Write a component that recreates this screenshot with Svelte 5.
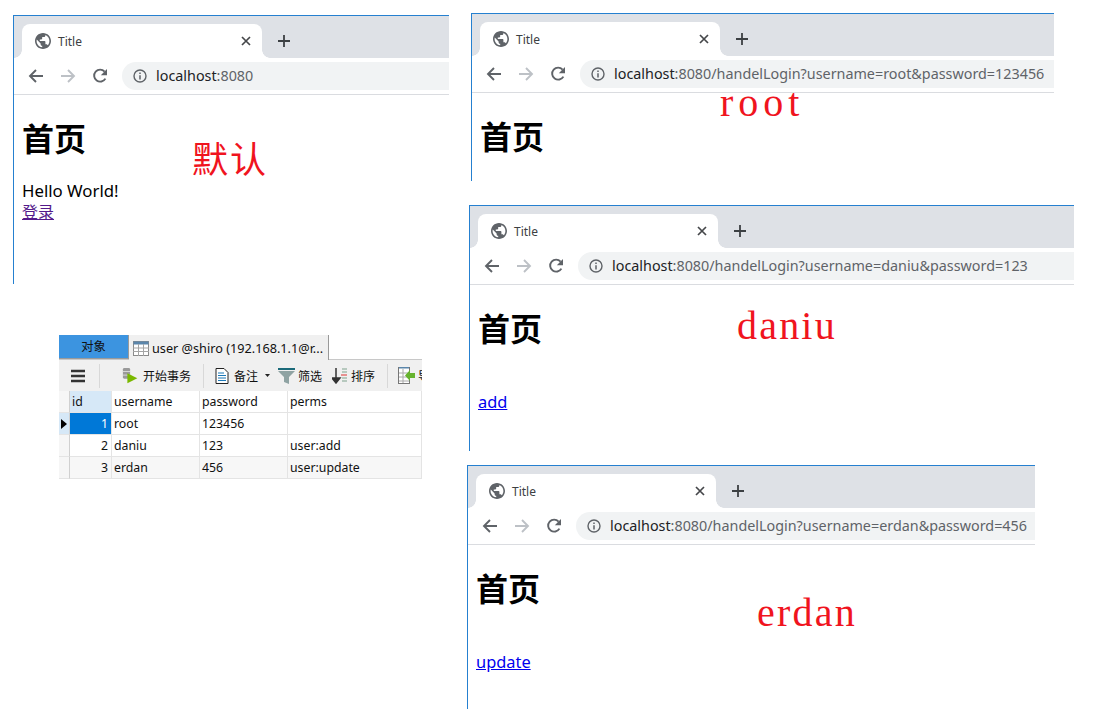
<script>
  const rows = [
    { id: 1, username: "root", password: "123456", perms: "", current: true },
    { id: 2, username: "daniu", password: "123", perms: "user:add" },
    { id: 3, username: "erdan", password: "456", perms: "user:update" },
  ];
</script>

{#snippet browser(cls, path, hello, link, visited)}
  <section class="win {cls}">
    <div class="tabstrip">
      <div class="tab">
        <svg class="globe" width="16" height="16" viewBox="2 2 20 20"><circle cx="12" cy="12" r="10" fill="#fff"/><path fill="#5f6368" d="M12 2C6.48 2 2 6.48 2 12s4.48 10 10 10 10-4.48 10-10S17.52 2 12 2zm-1 17.93c-3.95-.49-7-3.85-7-7.93 0-.62.08-1.21.21-1.79L9 15v1c0 1.1.9 2 2 2v1.93zm6.9-2.54c-.26-.81-1-1.39-1.9-1.39h-1v-3c0-.55-.45-1-1-1H8v-2h2c.55 0 1-.45 1-1V7h2c1.1 0 2-.9 2-2v-.41c2.93 1.19 5 4.06 5 7.41 0 2.08-.8 3.97-2.1 5.39z"/></svg>
        <span class="tabtitle">Title</span>
        <svg class="close" width="10" height="10" viewBox="0 0 10 10"><path d="M1 1l8 8M9 1l-8 8" stroke="#45474a" stroke-width="1.7" fill="none"/></svg>
      </div>
      <svg class="plus" width="12" height="12" viewBox="0 0 12 12"><path d="M6 0v12M0 6h12" stroke="#3c4043" stroke-width="1.8" fill="none"/></svg>
    </div>
    <div class="toolbar">
      <svg class="nav" width="16" height="16" viewBox="0 0 16 16"><path d="M15 8H2M8 2L2 8l6 6" stroke="#5f6368" stroke-width="1.9" fill="none"/></svg>
      <svg class="nav" width="16" height="16" viewBox="0 0 16 16"><path d="M1 8h13M8 2l6 6-6 6" stroke="#bdc1c6" stroke-width="1.9" fill="none"/></svg>
      <svg class="nav" width="16" height="16" viewBox="0 0 16 16"><path d="M13.400 10.600A6 6 0 1 1 12.600 3.600" stroke="#5f6368" stroke-width="1.9" fill="none"/><path d="M15 1v6.200H8.800z" fill="#5f6368"/></svg>
      <div class="omnibox">
        <svg class="info" width="14" height="14" viewBox="0 0 14 14"><circle cx="7" cy="7" r="6" stroke="#5f6368" stroke-width="1.4" fill="none"/><path d="M7 6.200v4.200M7 3.600v1.500" stroke="#5f6368" stroke-width="1.5"/></svg>
        <span class="url"><span class="host">localhost</span>{path}</span>
      </div>
    </div>
    <div class="page">
      <h1>首页</h1>
      <div class="line">{hello}</div>
      {#if link}<a class:visited href={"#"}>{link}</a>{/if}
    </div>
  </section>
{/snippet}

<main class="canvas">
  {@render browser("w1", ":8080", "Hello World!", "登录", true)}
  {@render browser("w2", ":8080/handelLogin?username=root&password=123456", "", "", false)}
  {@render browser("w3", ":8080/handelLogin?username=daniu&password=123", "", "add", false)}
  {@render browser("w4", ":8080/handelLogin?username=erdan&password=456", "", "update", false)}

  <span class="note n-default">默认</span>
  <span class="note n-root">root</span>
  <span class="note n-daniu">daniu</span>
  <span class="note n-erdan">erdan</span>

  <section class="navicat">
    <div class="nc-tabs">
      <div class="nc-objects">对象</div>
      <div class="nc-tab">
        <svg width="16" height="16" viewBox="0 0 16 16"><rect x="0.5" y="1.5" width="15" height="14" fill="#fff" stroke="#8a8a8a"/><rect x="0.5" y="1.5" width="15" height="3" fill="#5b86ab"/><path d="M0 8h16M0 11.5h16M5.5 4v12M10.5 4v12" stroke="#a5a5a5"/></svg>
        <span>user @shiro (192.168.1.1@r...</span>
      </div>
    </div>
    <div class="nc-toolbar">
      <svg class="menu" width="14" height="14" viewBox="0 0 14 14"><path d="M0 2h14M0 7h14M0 12h14" stroke="#333" stroke-width="2.6"/></svg>
      <i class="sep"></i>
      <button class="begin">
        <svg width="18" height="18" viewBox="0 0 20 20"><rect x="1" y="1" width="8" height="12" rx="1.5" fill="#9a9a9a"/><path d="M1 5h8M1 9h8" stroke="#ddd"/><path d="M6 7l11 5.500L6 18z" fill="#7ab800"/></svg>
        开始事务
      </button>
      <i class="sep"></i>
      <button class="memo">
        <svg width="14" height="16" viewBox="0 0 14 16"><path d="M1 .5h8l4 4v11H1z" fill="#fff" stroke="#222"/><path d="M3 5h6M3 7.500h8M3 10h8M3 12.500h8" stroke="#1b78b8"/></svg>
        备注
        <svg class="caret" width="5" height="3" viewBox="0 0 5 3"><path d="M0 0h5L2.500 3z" fill="#222"/></svg>
      </button>
      <button class="filter">
        <svg width="17" height="16" viewBox="0 0 17 16"><path d="M0 0h17v2H0z" fill="#1b6a7a"/><path d="M0 3h17l-6 6v7l-5-2V9z" fill="#8fa3a3"/></svg>
        筛选
      </button>
      <button class="sort">
        <svg width="15" height="16" viewBox="0 0 15 16"><path d="M4 0v11M0 10l4 5 4-5z" fill="#333" stroke="#333" stroke-width="1.500"/><path d="M10 1h5M10 4h5M10 10h5M10 13h5" stroke="#7fa28d"/><path d="M9 7h6" stroke="#d33"/></svg>
        排序
      </button>
      <i class="sep"></i>
      <button class="export">
        <svg width="17" height="17" viewBox="0 0 17 17"><rect x="0.500" y="0.500" width="11" height="16" fill="#fff" stroke="#777"/><path d="M1 0.500h10" stroke="#5b86ab" stroke-width="2"/><path d="M1 6h10M1 10h10M1 14h10M5 2v14" stroke="#aaa"/><path d="M17 6h-5V3L7 8.500l5 5.500v-3h5z" fill="#67b32e"/></svg>
        导
      </button>
    </div>
    <div class="grid head">
      <div class="mark"></div>
      <div class="cell idh">id</div>
      <div class="cell">username</div>
      <div class="cell">password</div>
      <div class="cell">perms</div>
    </div>
    {#each rows as r, i}
      <div class="grid row" class:alt={i === 2}>
        <div class="mark" class:on={r.current}>
          {#if r.current}<svg width="6" height="10" viewBox="0 0 6 10"><path d="M0 0l6 5-6 5z" fill="#000"/></svg>{/if}
        </div>
        <div class="cell num" class:sel={r.current}>{r.id}</div>
        <div class="cell">{r.username}</div>
        <div class="cell">{r.password}</div>
        <div class="cell">{r.perms}</div>
      </div>
    {/each}
  </section>
</main>

<style>
  :global(body) {
    background: #fff;
  }
  .canvas {
    position: relative;
    width: 1103px;
    height: 721px;
    overflow: hidden;
    font-family: "Noto Sans", "Noto Sans CJK SC", sans-serif;
  }

  /* the collage: each screenshot sits where it was pasted */
  .win {
    position: absolute;
    box-sizing: border-box;
    overflow: hidden;
    border-left: 1px solid #2580d0;
    border-top: 1px solid #2580d0;
    background: #fff;
  }
  .w1 { left: 13px; top: 15px; width: 436px; height: 269px; }
  .w2 { left: 471px; top: 13px; width: 583px; height: 168px; }
  .w3 { left: 469px; top: 205px; width: 605px; height: 246px; }
  .w4 { left: 467px; top: 465px; width: 568px; height: 244px; }

  .tabstrip {
    display: flex;
    align-items: flex-end;
    height: 42px;
    padding-left: 8px;
    background: #dee1e6;
  }
  .tab {
    position: relative;
    display: flex;
    align-items: center;
    box-sizing: border-box;
    width: 240px;
    height: 34px;
    padding: 0 11px 0 13px;
    background: #fff;
    border-radius: 8px 8px 0 0;
  }
  .tab::before,
  .tab::after {
    content: "";
    position: absolute;
    bottom: 0;
    width: 8px;
    height: 8px;
  }
  .tab::before {
    left: -8px;
    background: radial-gradient(circle at 0 0, transparent 7.5px, #fff 8px);
  }
  .tab::after {
    right: -8px;
    background: radial-gradient(circle at 100% 0, transparent 7.5px, #fff 8px);
  }
  .globe { flex: none; }
  .tabtitle {
    flex: 1;
    margin-left: 7px;
    font: 12px "Noto Sans", sans-serif;
    color: #3c4043;
  }
  .close { flex: none; }
  .plus {
    flex: none;
    margin: 0 0 11px 16px;
  }

  .toolbar {
    display: flex;
    align-items: center;
    height: 37px;
    padding-left: 14px;
    box-sizing: border-box;
    border-bottom: 1px solid #dadce0;
  }
  .nav {
    flex: none;
    margin-right: 16px;
  }
  .omnibox {
    flex: 1;
    display: flex;
    align-items: center;
    height: 28px;
    margin-left: -2px;
    margin-right: -40px;
    padding-left: 11px;
    border-radius: 14px 0 0 14px;
    background: #f1f3f4;
  }
  .url {
    margin-left: 9px;
    margin-top: -2px;
    font: 14.350px "Noto Sans", sans-serif;
    color: #5f6368;
    white-space: nowrap;
  }
  .host { color: #202124; }

  .page {
    padding: 0 8px;
    color: #000;
    line-height: 22px;
  }
  h1 {
    margin: 23px 0 24px;
    font-size: 32px;
    line-height: 38px;
    font-weight: 700;
    font-family: "Noto Sans CJK SC", sans-serif;
  }
  .line {
    height: 21px;
    font-size: 16.800px;
  }
  a { color: #0000ee; font-size: 16.400px; }
  a.visited { color: #551a8b; font-size: 16px; }

  .note {
    position: absolute;
    color: #f0141e;
    line-height: 1;
    white-space: nowrap;
  }
  .n-default {
    left: 192px;
    top: 139px;
    font-family: "Noto Sans CJK SC", serif;
    font-size: 36px;
    letter-spacing: 2px;
  }
  .n-root, .n-daniu, .n-erdan {
    font-family: "Liberation Serif", serif;
    font-size: 40px;
  }
  .n-root { left: 720px; top: 83px; letter-spacing: 5px; }
  .n-daniu { left: 737px; top: 306px; letter-spacing: 2.200px; }
  .n-erdan { left: 757px; top: 593px; letter-spacing: 2.200px; }

  .navicat {
    position: absolute;
    left: 59px;
    top: 335px;
    width: 363px;
    font: 12.300px "Noto Sans", "Noto Sans CJK SC", sans-serif;
    color: #111;
  }
  .nc-tabs {
    display: flex;
    height: 25px;
    border-bottom: 1px solid #c8c8c8;
    box-sizing: border-box;
  }
  .nc-objects {
    width: 70px;
    height: 24px;
    line-height: 24px;
    text-align: center;
    background: #3c94e0;
    border-right: 1px solid #9a9a9a;
    border-bottom: 1px solid #9a9a9a;
    box-sizing: border-box;
  }
  .nc-tab {
    display: flex;
    align-items: center;
    gap: 3px;
    width: 200px;
    height: 25px;
    padding-left: 4px;
    box-sizing: border-box;
    background: #f0f0f0;
    border-right: 1px solid #999;
    white-space: nowrap;
    font-size: 12.700px;
  }
  .nc-toolbar {
    display: flex;
    align-items: center;
    height: 31px;
    background: #f0f0f0;
    overflow: hidden;
  }
  .menu { margin-left: 12px; flex: none; }
  .sep {
    flex: none;
    width: 1px;
    height: 24px;
    background: #d8d8d8;
  }
  .nc-toolbar > .sep:nth-of-type(1) { margin-left: 14px; }
  .nc-toolbar button {
    flex: none;
    display: flex;
    align-items: center;
    gap: 3px;
    padding: 0;
    border: 0;
    background: none;
    font: inherit;
    font-size: 12px;
    color: #111;
    white-space: nowrap;
  }
  .nc-toolbar .begin { margin: 0 12px 0 22px; }
  .nc-toolbar .memo { margin: 0 8px 0 11px; gap: 5px; }
  .caret { margin-left: 2px; }
  .nc-toolbar .filter { margin-right: 10px; }
  .nc-toolbar .sort { margin-right: 12px; gap: 4px; }
  .nc-toolbar .export { margin-left: 10px; }

  .grid {
    display: grid;
    grid-template-columns: 11px 42px 88px 88px 1fr;
    height: 22px;
  }
  .row { background: #fff; }
  .row.alt { background: #f7f7f7; }
  .cell {
    box-sizing: border-box;
    padding: 0 2px;
    line-height: 21px;
    white-space: nowrap;
    border-right: 1px solid #e4e4e4;
    border-bottom: 1px solid #e4e4e4;
  }
  .idh { background: #d6e8f7; }
  .num { text-align: right; padding-right: 3px; }
  .sel {
    background: #0078d7;
    color: #fff;
  }
  .mark {
    display: flex;
    align-items: center;
    justify-content: center;
    box-sizing: border-box;
    background: #f6f6f6;
    border-right: 1px solid #d0d0d0;
    border-bottom: 1px solid #e4e4e4;
  }
  .mark.on { background: #d6e8f7; }
</style>
